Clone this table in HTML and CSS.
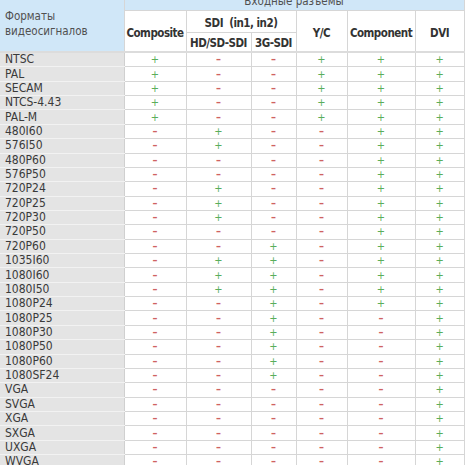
FILE: index.html
```html
<!DOCTYPE html>
<html lang="ru">
<head>
<meta charset="utf-8">
<title>Форматы видеосигналов</title>
<link rel="stylesheet" href="styles.css">
</head>
<body>
<table class="spec">
  <colgroup>
    <col class="c-name"><col class="c-comp"><col class="c-hd"><col class="c-3g"><col class="c-yc"><col class="c-cpt"><col class="c-dvi">
  </colgroup>
  <thead>
    <tr class="h1">
      <th rowspan="3" class="name-head">Форматы<br>видеосигналов</th>
      <th colspan="6" class="group-head">Входные разъемы</th>
    </tr>
    <tr class="h2">
      <th rowspan="2">Composite</th>
      <th colspan="2">SDI&nbsp;&nbsp;(in1, in2)</th>
      <th rowspan="2">Y/C</th>
      <th rowspan="2">Component</th>
      <th rowspan="2">DVI</th>
    </tr>
    <tr class="h3">
      <th>HD/SD-SDI</th>
      <th>3G-SDI</th>
    </tr>
  </thead>
  <tbody>
    <tr><td>NTSC</td><td class="y">+</td><td class="n">–</td><td class="n">–</td><td class="y">+</td><td class="y">+</td><td class="y">+</td></tr>
    <tr><td>PAL</td><td class="y">+</td><td class="n">–</td><td class="n">–</td><td class="y">+</td><td class="y">+</td><td class="y">+</td></tr>
    <tr><td>SECAM</td><td class="y">+</td><td class="n">–</td><td class="n">–</td><td class="y">+</td><td class="y">+</td><td class="y">+</td></tr>
    <tr><td>NTCS-4.43</td><td class="y">+</td><td class="n">–</td><td class="n">–</td><td class="y">+</td><td class="y">+</td><td class="y">+</td></tr>
    <tr><td>PAL-M</td><td class="y">+</td><td class="n">–</td><td class="n">–</td><td class="y">+</td><td class="y">+</td><td class="y">+</td></tr>
    <tr><td>480I60</td><td class="n">–</td><td class="y">+</td><td class="n">–</td><td class="n">–</td><td class="y">+</td><td class="y">+</td></tr>
    <tr><td>576I50</td><td class="n">–</td><td class="y">+</td><td class="n">–</td><td class="n">–</td><td class="y">+</td><td class="y">+</td></tr>
    <tr><td>480P60</td><td class="n">–</td><td class="n">–</td><td class="n">–</td><td class="n">–</td><td class="y">+</td><td class="y">+</td></tr>
    <tr><td>576P50</td><td class="n">–</td><td class="n">–</td><td class="n">–</td><td class="n">–</td><td class="y">+</td><td class="y">+</td></tr>
    <tr><td>720P24</td><td class="n">–</td><td class="y">+</td><td class="n">–</td><td class="n">–</td><td class="y">+</td><td class="y">+</td></tr>
    <tr><td>720P25</td><td class="n">–</td><td class="y">+</td><td class="n">–</td><td class="n">–</td><td class="y">+</td><td class="y">+</td></tr>
    <tr><td>720P30</td><td class="n">–</td><td class="y">+</td><td class="n">–</td><td class="n">–</td><td class="y">+</td><td class="y">+</td></tr>
    <tr><td>720P50</td><td class="n">–</td><td class="n">–</td><td class="n">–</td><td class="n">–</td><td class="y">+</td><td class="y">+</td></tr>
    <tr><td>720P60</td><td class="n">–</td><td class="n">–</td><td class="y">+</td><td class="n">–</td><td class="y">+</td><td class="y">+</td></tr>
    <tr><td>1035I60</td><td class="n">–</td><td class="y">+</td><td class="y">+</td><td class="n">–</td><td class="y">+</td><td class="y">+</td></tr>
    <tr><td>1080I60</td><td class="n">–</td><td class="y">+</td><td class="y">+</td><td class="n">–</td><td class="y">+</td><td class="y">+</td></tr>
    <tr><td>1080I50</td><td class="n">–</td><td class="y">+</td><td class="y">+</td><td class="n">–</td><td class="y">+</td><td class="y">+</td></tr>
    <tr><td>1080P24</td><td class="n">–</td><td class="n">–</td><td class="y">+</td><td class="n">–</td><td class="y">+</td><td class="y">+</td></tr>
    <tr><td>1080P25</td><td class="n">–</td><td class="n">–</td><td class="y">+</td><td class="n">–</td><td class="n">–</td><td class="y">+</td></tr>
    <tr><td>1080P30</td><td class="n">–</td><td class="n">–</td><td class="y">+</td><td class="n">–</td><td class="n">–</td><td class="y">+</td></tr>
    <tr><td>1080P50</td><td class="n">–</td><td class="n">–</td><td class="y">+</td><td class="n">–</td><td class="n">–</td><td class="y">+</td></tr>
    <tr><td>1080P60</td><td class="n">–</td><td class="n">–</td><td class="y">+</td><td class="n">–</td><td class="n">–</td><td class="y">+</td></tr>
    <tr><td>1080SF24</td><td class="n">–</td><td class="n">–</td><td class="y">+</td><td class="n">–</td><td class="n">–</td><td class="y">+</td></tr>
    <tr><td>VGA</td><td class="n">–</td><td class="n">–</td><td class="n">–</td><td class="n">–</td><td class="n">–</td><td class="y">+</td></tr>
    <tr><td>SVGA</td><td class="n">–</td><td class="n">–</td><td class="n">–</td><td class="n">–</td><td class="n">–</td><td class="y">+</td></tr>
    <tr><td>XGA</td><td class="n">–</td><td class="n">–</td><td class="n">–</td><td class="n">–</td><td class="n">–</td><td class="y">+</td></tr>
    <tr><td>SXGA</td><td class="n">–</td><td class="n">–</td><td class="n">–</td><td class="n">–</td><td class="n">–</td><td class="y">+</td></tr>
    <tr><td>UXGA</td><td class="n">–</td><td class="n">–</td><td class="n">–</td><td class="n">–</td><td class="n">–</td><td class="y">+</td></tr>
    <tr><td>WVGA</td><td class="n">–</td><td class="n">–</td><td class="n">–</td><td class="n">–</td><td class="n">–</td><td class="y">+</td></tr>
  </tbody>
</table>
</body>
</html>
```

FILE: styles.css
```css
html, body {
  margin: 0;
  padding: 0;
  background: #ffffff;
}

body {
  font-family: "DejaVu Sans Condensed", "DejaVu Sans", sans-serif;
  font-stretch: condensed;
  color: #3a3a3a;
  overflow: hidden;
}

.spec {
  border-collapse: collapse;
  table-layout: fixed;
  width: 464px;
  margin-top: -10px;
  font-size: 12px;
}

.c-name { width: 124px; }
.c-comp { width: 62px; }
.c-hd { width: 65px; }
.c-3g { width: 45px; }
.c-yc { width: 51px; }
.c-cpt { width: 68px; }
.c-dvi { width: 49px; }

.spec th,
.spec td {
  border: 1px solid #d6d6d6;
  padding: 0;
  white-space: nowrap;
  overflow: hidden;
}

.spec tr > :first-child {
  border-left: none;
}

.spec th {
  font-weight: bold;
  font-size: 11.5px;
  letter-spacing: -0.5px;
  color: #333333;
  text-align: center;
  vertical-align: middle;
  background: #ffffff;
  line-height: 14px;
}

.spec .name-head {
  background: #d0e7f8;
  font-weight: normal;
  font-size: 11.5px;
  letter-spacing: 0;
  color: #505050;
  text-align: left;
  line-height: 15px;
  padding: 5px 0 0 5px;
  border-bottom: 2px solid #dcdcdc;
}

.spec .group-head {
  background: #d0e7f8;
  font-weight: normal;
  font-size: 11.5px;
  letter-spacing: 0;
  color: #505050;
  height: 17px;
  line-height: 14px;
  padding-bottom: 2px;
  vertical-align: bottom;
}

.h2 th {
  height: 18px;
  padding-top: 3px;
}

.h3 th {
  height: 16px;
  padding-top: 2px;
}

.h2 th[rowspan],
.h3 th {
  border-bottom: 2px solid #dcdcdc;
}

.spec td {
  height: 13.36px;
  line-height: 13px;
  text-align: center;
  font-size: 12px;
}

.spec td:first-child {
  background: #e4e4e4;
  text-align: left;
  padding-left: 5px;
  font-weight: normal;
  font-size: 12px;
  color: #3a3a3a;
  border-top-color: #f2f2f2;
  border-bottom-color: #f2f2f2;
  border-right-color: #d0d0d0;
}

.spec td.y {
  color: #5aae5a;
  font-size: 11px;
}

.spec td.n {
  color: #cf6262;
  font-weight: bold;
  font-size: 11px;
}
```
